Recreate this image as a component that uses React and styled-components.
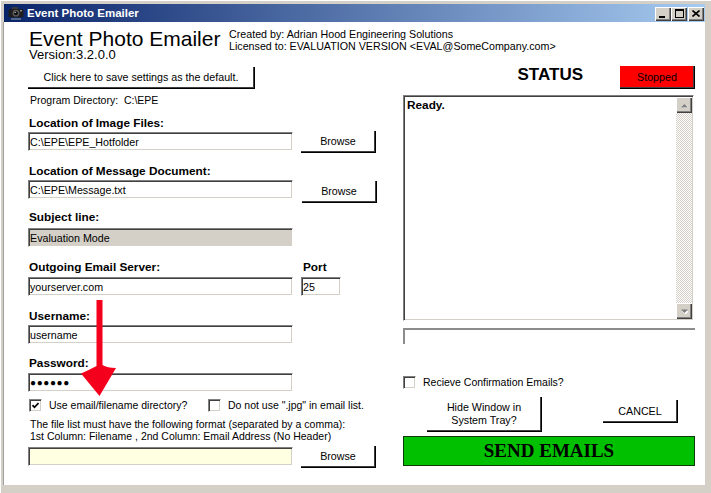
import React from "react";
import styled, { createGlobalStyle } from "styled-components";

const GlobalStyle = createGlobalStyle`
  html, body {
    margin: 0;
    padding: 0;
    background: #d4d0c8;
  }
  body {
    font-family: "Liberation Sans", Arial, sans-serif;
    font-size: 10.5px;
    color: #000;
  }
`;

const App = () => {
  return (
    <>
      <GlobalStyle />
      <Window>
        <TitleBar>
          <AppIcon />
          <TitleText>Event Photo Emailer</TitleText>
          <Controls>
            <CtlButton>
              <svg width="8" height="8" viewBox="0 0 8 8">
                <rect x="0" y="6" width="6" height="2" fill="#000" />
              </svg>
            </CtlButton>
            <CtlButton>
              <svg width="9" height="9" viewBox="0 0 9 9">
                <rect x="0.5" y="0.5" width="8" height="8" fill="none" stroke="#000" />
                <rect x="0" y="0" width="9" height="2" fill="#000" />
              </svg>
            </CtlButton>
            <CtlButton $gap>
              <svg width="8" height="7" viewBox="0 0 8 7">
                <path d="M0.5 0.5 L7.5 6.5 M7.5 0.5 L0.5 6.5" stroke="#000" strokeWidth="1.6" />
              </svg>
            </CtlButton>
          </Controls>
        </TitleBar>

        <Client>
          <Header>
            <TitleBlock>
              <AppTitle>Event Photo Emailer</AppTitle>
              <Version>Version:3.2.0.0</Version>
            </TitleBlock>
            <Credits>
              <div>Created by: Adrian Hood Engineering Solutions</div>
              <div>Licensed to: EVALUATION VERSION &lt;EVAL@SomeCompany.com&gt;</div>
            </Credits>
          </Header>

          <Columns>
            <LeftCol>
              <Button $w={227} $h={22} $mt={6}>
                Click here to save settings as the default.
              </Button>
              <Plain $mt={5}>Program Directory:&nbsp; C:\EPE</Plain>

              <Label $mt={10}>Location of Image Files:</Label>
              <Row $mt={1}>
                <Field $mt={1} readOnly value="C:\EPE\EPE_Hotfolder" />
                <Button $w={75} $h={22} $ml={8}>Browse</Button>
              </Row>

              <Label $mt={12}>Location of Message Document:</Label>
              <Row $mt={2}>
                <Field readOnly value="C:\EPE\Message.txt" />
                <Button $w={75} $h={22} $ml={9} $mt={1}>Browse</Button>
              </Row>

              <Label $mt={8}>Subject line:</Label>
              <Field $mt={4} $bg="#d4d0c8" readOnly value="Evaluation Mode" />

              <Row $mt={14}>
                <Label $w={273}>Outgoing Email Server:</Label>
                <Label>Port</Label>
              </Row>
              <Row $mt={3}>
                <Field readOnly value="yourserver.com" />
                <Field $w={40} $ml={8} readOnly value="25" />
              </Row>

              <Label $mt={14}>Username:</Label>
              <Field $mt={2} readOnly value="username" />

              <Label $mt={13}>Password:</Label>
              <Field $mt={3} $dots readOnly value="●●●●●●" />

              <Row $mt={7}>
                <CheckItem $w={178}>
                  <CheckBox checked />
                  <CheckText>Use email/filename directory?</CheckText>
                </CheckItem>
                <CheckItem>
                  <CheckBox />
                  <CheckText>Do not use ".jpg" in email list.</CheckText>
                </CheckItem>
              </Row>

              <Note>
                <div>The file list must have the following format (separated by a comma):</div>
                <div>1st Column: Filename , 2nd Column: Email Address (No Header)</div>
              </Note>
              <Row $mt={4}>
                <Field $mt={1} $bg="#ffffe1" readOnly value="" />
                <Button $w={75} $h={22} $ml={8}>Browse</Button>
              </Row>
            </LeftCol>

            <RightCol>
              <StatusHead>
                <StatusTitle>STATUS</StatusTitle>
                <Button $w={75} $h={23} $bg="#ff0000">Stopped</Button>
              </StatusHead>

              <StatusBox>
                <StatusText>Ready.</StatusText>
                <ScrollBar>
                  <ScrollBtn>
                    <Arrow />
                  </ScrollBtn>
                  <Track />
                  <ScrollBtn>
                    <Arrow $down />
                  </ScrollBtn>
                </ScrollBar>
              </StatusBox>

              <ProgressBox />

              <CheckItem $mt={32} $ml={0}>
                <CheckBox />
                <CheckText>Recieve Confirmation Emails?</CheckText>
              </CheckItem>

              <Row $mt={8}>
                <Button $w={115} $h={35} $ml={24}>
                  Hide Window in
                  <br />
                  System Tray?
                </Button>
                <Button $w={75} $h={23} $ml={61} $mt={3}>CANCEL</Button>
              </Row>

              <SendBar>SEND EMAILS</SendBar>
            </RightCol>
          </Columns>
        </Client>

        <RedArrow width="38" height="100" viewBox="0 0 38 100">
          <path
            d="M16.5 2 H22.5 V67 Q27 70 36 70 L19.5 98 L1 75.5 Q9 72 16.5 68 Z"
            fill="#f4001c"
          />
        </RedArrow>
      </Window>
    </>
  );
};

const AppIcon = () => (
  <svg width="16" height="16" viewBox="0 0 16 16">
    <rect x="4" y="2" width="6" height="3" rx="1" fill="#3a3a3a" />
    <rect x="0.5" y="4" width="15" height="8.5" rx="2" fill="#1e1e1e" />
    <circle cx="8" cy="8.2" r="3.4" fill="#5a5a5a" />
    <circle cx="8" cy="8.2" r="2" fill="#111" />
    <circle cx="7.2" cy="7.4" r="0.7" fill="#bbb" />
    <rect x="12" y="5" width="2" height="1.5" fill="#888" />
    <rect x="3" y="13.5" width="10" height="1" fill="#9aa" />
  </svg>
);

const CheckBox = ({ checked }) => (
  <Box>
    {checked && (
      <svg width="7" height="7" viewBox="0 0 7 7">
        <polyline points="0.5,3.2 2.5,5.3 6.5,1" fill="none" stroke="#000" strokeWidth="1.7" />
      </svg>
    )}
  </Box>
);

const Arrow = ({ $down }) => (
  <svg width="7" height="5" viewBox="0 0 7 5">
    {$down ? (
      <>
        <path d="M1 2 H8 L4.5 5.5 Z" fill="#fff" />
        <path d="M0 0.5 H7 L3.5 4 Z" fill="#808080" />
      </>
    ) : (
      <>
        <path d="M1 5 H8 L4.5 1.5 Z" fill="#fff" />
        <path d="M0 4.5 H7 L3.5 1 Z" fill="#808080" />
      </>
    )}
  </svg>
);

const Window = styled.div`
  position: relative;
  width: 711px;
  height: 493px;
  box-sizing: border-box;
  display: flex;
  flex-direction: column;
  padding: 4px 6px 8px 3px;
  background: #d4d0c8;
  box-shadow: inset 1px 1px #fff;
  overflow: hidden;
`;

const TitleBar = styled.div`
  height: 18px;
  margin-left: 1px;
  padding-left: 4px;
  display: flex;
  align-items: center;
  background: linear-gradient(to right, #0a246a, #a6caf0);
`;

const TitleText = styled.span`
  margin-left: 3px;
  color: #fff;
  font-weight: bold;
  font-size: 11.5px;
`;

const Controls = styled.div`
  margin-left: auto;
  margin-right: 1px;
  margin-top: 1px;
  display: flex;
`;

const CtlButton = styled.div`
  box-sizing: border-box;
  width: 16px;
  height: 14px;
  margin-left: ${(p) => (p.$gap ? 1 : 0)}px;
  display: flex;
  align-items: center;
  justify-content: center;
  background: #d4d0c8;
  box-shadow: inset 1px 1px #fff, inset -1px -1px #404040, inset -2px -2px #808080;
`;

const Client = styled.div`
  flex: 1;
  background: #fff;
  padding: 6px 0 0 25px;
  box-shadow: inset 1px 0 #a0a0a0;
`;

const Header = styled.div`
  display: flex;
  align-items: flex-start;
  padding-left: 1px;
`;

const TitleBlock = styled.div`
  width: 200px;
`;

const AppTitle = styled.div`
  font-size: 21px;
  line-height: 21px;
  white-space: nowrap;
`;

const Version = styled.div`
  font-size: 13px;
  line-height: 12px;
`;

const Credits = styled.div`
  font-size: 10.7px;
  line-height: 12px;
  white-space: nowrap;
`;

const Columns = styled.div`
  display: flex;
  align-items: flex-start;
`;

const LeftCol = styled.div`
  width: 348px;
  display: flex;
  flex-direction: column;
`;

const RightCol = styled.div`
  width: 292px;
  margin-left: 27px;
  display: flex;
  flex-direction: column;
`;

const Row = styled.div`
  display: flex;
  align-items: flex-start;
  margin-top: ${(p) => p.$mt || 0}px;
`;

const Plain = styled.div`
  margin-top: ${(p) => p.$mt || 0}px;
  padding-left: 2px;
  line-height: 13px;
`;

const Label = styled.div`
  margin-top: ${(p) => p.$mt || 0}px;
  width: ${(p) => (p.$w ? `${p.$w}px` : "auto")};
  padding-left: 1px;
  font-weight: bold;
  font-size: 11.8px;
  line-height: 13px;
  white-space: nowrap;
`;

const Note = styled.div`
  margin-top: 6px;
  padding-left: 2px;
  line-height: 12px;
  white-space: nowrap;
`;

const Button = styled.button`
  box-sizing: border-box;
  width: ${(p) => p.$w}px;
  height: ${(p) => p.$h}px;
  margin: ${(p) => p.$mt || 0}px 0 0 ${(p) => p.$ml || 0}px;
  padding: 0;
  flex-shrink: 0;
  background: ${(p) => p.$bg || "#fff"};
  border: none;
  border-right: 1px solid #000;
  border-bottom: 1px solid #000;
  box-shadow: inset -1px -1px #404040;
  font-family: "Liberation Sans", Arial, sans-serif;
  font-size: 10.7px;
  line-height: 13px;
  color: #000;
  text-align: center;
`;

const Field = styled.input`
  box-sizing: border-box;
  width: ${(p) => p.$w || 265}px;
  height: 19px;
  margin: ${(p) => p.$mt || 0}px 0 0 ${(p) => p.$ml || 0}px;
  padding: 0 0 0 1px;
  flex-shrink: 0;
  border: 1px solid;
  border-color: #808080 #fff #fff #808080;
  box-shadow: inset 1px 1px #404040, inset -1px -1px #d4d0c8;
  background: ${(p) => p.$bg || "#fff"};
  font-family: "Liberation Sans", Arial, sans-serif;
  font-size: ${(p) => (p.$dots ? "10px" : "10.7px")};
  letter-spacing: ${(p) => (p.$dots ? "0.6px" : "normal")};
  color: #000;
  outline: none;
`;

const CheckItem = styled.label`
  display: flex;
  align-items: center;
  width: ${(p) => (p.$w ? `${p.$w}px` : "auto")};
  margin-top: ${(p) => p.$mt || 0}px;
  margin-left: ${(p) => (p.$ml === undefined ? 1 : p.$ml)}px;
  line-height: 13px;
  white-space: nowrap;
`;

const CheckText = styled.span`
  margin-left: 7px;
`;

const Box = styled.div`
  box-sizing: border-box;
  width: 13px;
  height: 13px;
  display: flex;
  align-items: center;
  justify-content: center;
  flex-shrink: 0;
  background: #fff;
  border: 1px solid;
  border-color: #808080 #fff #fff #808080;
  box-shadow: inset 1px 1px #404040, inset -1px -1px #d4d0c8;
`;

const StatusHead = styled.div`
  display: flex;
  align-items: flex-start;
  justify-content: flex-end;
  margin-top: 5px;
`;

const StatusTitle = styled.div`
  margin-right: 37px;
  font-size: 17px;
  line-height: 18px;
  font-weight: bold;
`;

const StatusBox = styled.div`
  box-sizing: border-box;
  width: 291px;
  height: 226px;
  margin-top: 6px;
  display: flex;
  border: 1px solid;
  border-color: #808080 #fff #fff #808080;
  box-shadow: inset 1px 1px #404040, inset -1px -1px #d4d0c8;
  padding: 1px;
  background: #fff;
`;

const StatusText = styled.div`
  flex: 1;
  padding: 2px 2px;
  font-weight: bold;
  font-size: 11.8px;
  line-height: 13px;
`;

const ScrollBar = styled.div`
  width: 16px;
  display: flex;
  flex-direction: column;
`;

const ScrollBtn = styled.div`
  box-sizing: border-box;
  width: 16px;
  height: 16px;
  display: flex;
  align-items: center;
  justify-content: center;
  background: #d4d0c8;
  box-shadow: inset 1px 1px #fff, inset -1px -1px #404040, inset -2px -2px #808080;
`;

const Track = styled.div`
  flex: 1;
  background: repeating-conic-gradient(#d4d0c8 0 25%, #fff 0 50%) 0 0 / 2px 2px;
`;

const ProgressBox = styled.div`
  box-sizing: border-box;
  width: 292px;
  height: 16px;
  margin-top: 7px;
  border-top: 2px solid #8c8c8c;
  border-left: 2px solid #8c8c8c;
`;

const SendBar = styled.div`
  box-sizing: border-box;
  width: 292px;
  height: 30px;
  margin-top: 4px;
  display: flex;
  align-items: center;
  justify-content: center;
  background: #00c000;
  border: 1px solid #0b3a0b;
  font-family: "Liberation Serif", "Times New Roman", serif;
  font-weight: bold;
  font-size: 19px;
  color: #000;
`;

const RedArrow = styled.svg`
  position: absolute;
  left: 80px;
  top: 298px;
`;

export default App;
